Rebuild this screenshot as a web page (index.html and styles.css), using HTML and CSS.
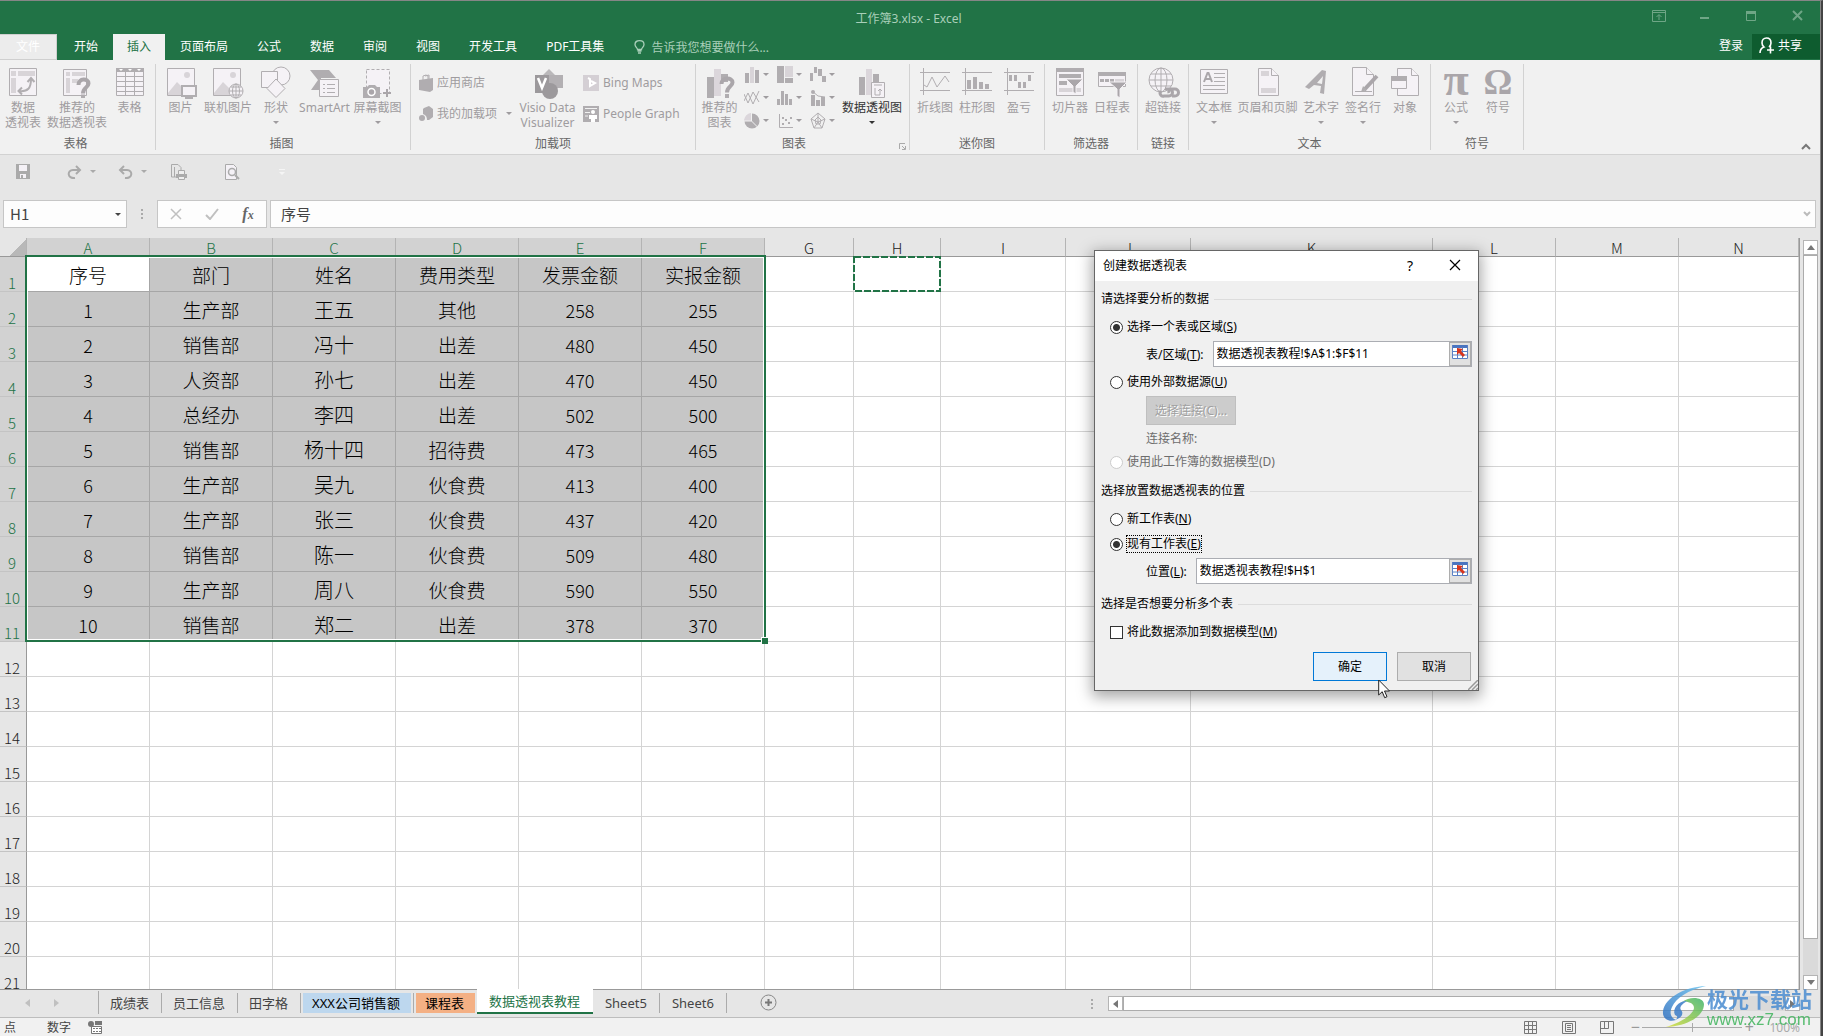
FILE: index.html
```html
<!DOCTYPE html>
<html lang="zh-CN">
<head>
<meta charset="utf-8">
<title>工作簿3.xlsx - Excel</title>
<link rel="stylesheet" href="styles.css">
</head>
<body>
<div class="app">
<header class="titlebar">
  <span class="doc-title">工作簿3.xlsx - Excel</span>
  <div class="win-controls">
    <button aria-label="功能区显示选项"><svg width="14" height="12" viewBox="0 0 14 12"><path d="M.5.5h13v11H.5zM.5 2.500h13M7 10V5M4.500 7 7 4.500 9.500 7" fill="none" stroke="currentColor"/></svg></button>
    <button aria-label="最小化"><svg width="10" height="12" viewBox="0 0 10 12"><path d="M0 7h9v2H0z" fill="currentColor"/></svg></button>
    <button aria-label="最大化"><svg width="10" height="12" viewBox="0 0 10 12"><path d="M.5 1.500h9v9h-9z" fill="none" stroke="currentColor"/><path d="M0 1h10v3H0z" fill="currentColor"/></svg></button>
    <button aria-label="关闭"><svg width="11" height="12" viewBox="0 0 11 12"><path d="m1 1 9 9M10 1l-9 9" stroke="currentColor" stroke-width="2"/></svg></button>
  </div>
</header>
<nav class="tabs">
  <button class="tab file">文件</button>
  <button class="tab">开始</button>
  <button class="tab active">插入</button>
  <button class="tab">页面布局</button>
  <button class="tab">公式</button>
  <button class="tab">数据</button>
  <button class="tab">审阅</button>
  <button class="tab">视图</button>
  <button class="tab">开发工具</button>
  <button class="tab">PDF工具集</button>
  <label class="tellme"><svg width="11" height="14" viewBox="0 0 11 14"><path d="M3.500 9.500C3.500 8 1 7 1 4.500 1 2 3 .7 5.500.7S10 2 10 4.500C10 7 7.500 8 7.500 9.500zM3.500 11h4M4 13h3" fill="none" stroke="currentColor" stroke-width="1.300"/></svg><input type="text" placeholder="告诉我您想要做什么..."></label>
  <a class="signin" href="#">登录</a>
  <button class="share"><svg width="16" height="17" viewBox="0 0 16 17"><path d="M1 16c0-3 1.500-5 4-6C3.800 9 3 7.500 3 6c0-3 1.800-5 4.500-5S12 3 12 6c0 1.500-.8 3-2 4M8 13h7M11.500 9.500v7" fill="none" stroke="#fff" stroke-width="1.600"/></svg>共享</button>
</nav>

<section class="ribbon">
  <div class="group g-tables">
    <div class="items">
      <button class="big"><svg class="ico" viewBox="0 0 32 32"><path class="o" d="M2.500 2.500h27v27h-27z"/><path class="l" d="M4 5h5v5H4zM11 5h17v5H11zM4 12h5v15H4z"/><path class="t" d="M12 25c9 1 12-3 12-12M20.500 16l3.500-4 3.500 4M15 21.500 11.500 25l3.500 3.500"/></svg><span>数据<br>透视表</span></button>
      <button class="big"><svg class="ico" viewBox="0 0 32 32"><path class="o" d="M2.500 3.500h23v26h-23z"/><path class="l" d="M5 6h4v4H5zM11 6h13v4H11zM5 12h4v15H5zM11 13h6v4h-6z"/><path d="M17.500 19c0-7 10-7 10-1.500 0 4-5.500 4-5.500 10" fill="none" stroke="#aaa6aa" stroke-width="4"/><path class="f" d="M20 28.500h4v3.500h-4z"/></svg><span>推荐的<br>数据透视表</span></button>
      <button class="big"><svg class="ico" viewBox="0 0 32 32"><path class="o" d="M2.500 2.500h27v27h-27zM2 10.500h28M2 15.500h28M2 20.500h28M2 25.500h28M11.500 6v24M20.500 6v24"/><path class="f" d="M2 2h28v4H2z"/><path d="M5 3h4l-2 2zM14 3h4l-2 2zM23 3h4l-2 2z" fill="#fff"/></svg>表格</button>
    </div><h2>表格</h2>
  </div>
  <div class="group g-illus">
    <div class="items">
      <button class="big"><svg class="ico" viewBox="0 0 32 32"><path class="o" d="M2.500 2.500h27v27h-27z"/><circle class="l" cx="22" cy="9" r="3"/><path class="l" d="m3 27 9-11 8 8v5H3z"/><path class="o s2" d="M17 20h14v10H17z"/><path class="t" d="M24 30v3M20 32h8"/></svg>图片</button>
      <button class="big"><svg class="ico" viewBox="0 0 32 32"><path class="o" d="M1.500 2.500h27v27h-27z"/><circle class="l" cx="21" cy="9" r="3"/><path class="l" d="m2 27 9-11 8 8v5H2z"/><circle class="o" cx="24" cy="25" r="7"/><path class="o" d="M17 25h14M24 18v14M19 21h10M19 29h10"/><ellipse class="n" cx="24" cy="25" rx="3.500" ry="7"/></svg>联机图片</button>
      <button class="big"><svg class="ico" viewBox="0 0 32 32"><circle class="o" cx="21" cy="10" r="9"/><path class="o" d="M1.500 5.500h16v16h-16z"/><path class="o" d="m16 13 9 9.500-9 9-9-9z"/></svg>形状<i class="caret"></i></button>
      <button class="big"><svg class="ico" viewBox="0 0 32 32"><path class="f" d="M1 4h19l7 8h-15v12H2l7-10z"/><path class="o" d="M10.500 13.500h19v17h-19z"/><path class="o" d="M14 18.500h2M18 18.500h8M14 22.500h2M18 22.500h8M14 26.500h2M18 26.500h8"/></svg>SmartArt</button>
      <button class="big"><svg class="ico" viewBox="0 0 32 32"><path class="o" stroke-dasharray="3 2" d="M4.500 3.500h23v24h-23z"/><path class="f" d="M1 21h4l2-2h6l2 2h3v11H1z"/><circle cx="9.500" cy="26" r="3.500" fill="#aaa6aa" stroke="#fff" stroke-width="1.500"/><path d="M25 23v8M21 27h8" stroke="#aaa6aa" stroke-width="2"/></svg>屏幕截图<i class="caret"></i></button>
    </div><h2>插图</h2>
  </div>
  <div class="group g-addins">
    <div class="items">
      <div class="stack">
        <button class="small"><svg width="14" height="18" viewBox="0 0 14 18"><path class="f" d="M0 6 14 4v12l-3 2-11-2z"/><path class="n" d="M4 6V2l3-1 2 1v3M6 2l4-1v4"/></svg>应用商店</button>
        <button class="small"><svg width="14" height="18" viewBox="0 0 14 18"><path class="f" d="m5 3 5-2 4 3v8l-4 3H8c0-3-1-5-4-6V4z"/><circle class="f" cx="3" cy="13" r="3"/></svg>我的加载项<i class="caret side"></i></button>
      </div>
      <button class="big"><svg class="ico" viewBox="0 0 32 32"><path d="m17 3 7 7-7 7-7-7z" fill="#bab8ba"/><path d="M17 9h14v13H17z" fill="#b3b0b3"/><circle cx="18" cy="25" r="8" fill="#9c999c"/><path d="M3 9h14v18H3z" fill="#9c999c"/><path d="m6 12 4 10 4-10" fill="none" stroke="#fff" stroke-width="2.500"/></svg><span>Visio Data<br>Visualizer</span></button>
      <div class="stack">
        <button class="small"><svg width="16" height="18" viewBox="0 0 16 18"><path d="M0 1h16v16H0z" fill="#d4cfd4"/><path d="m5 4 2 1v7l5-3-4-2" fill="none" stroke="#fff" stroke-width="2"/></svg>Bing Maps</button>
        <button class="small"><svg width="16" height="18" viewBox="0 0 16 18"><path class="f" d="M0 1h16v16H0z"/><path d="M2 3.500h12M2 7.500h5M2 11h3" stroke="#f1f1f1"/><circle cx="10" cy="7" r="2" fill="#fff"/><path d="M6 10h8v4h-2v3H8v-3H6z" fill="#fff"/></svg>People Graph</button>
      </div>
    </div><h2>加载项</h2>
  </div>
  <div class="group g-charts">
    <div class="items">
      <button class="big"><svg class="ico" viewBox="0 0 32 32"><path class="f" d="M3 11h7v21H3zM17 8h7v8h-7z"/><path d="M10 3h7v27h-7z" fill="#dbd6db"/><path d="M17.500 18c0-7 11-7 11-1.500 0 4-5.500 4-5.500 10" fill="none" stroke="#aaa6aa" stroke-width="4"/><path class="f" d="M21 28h4v4h-4z"/></svg><span>推荐的<br>图表</span></button>
      <div class="minis">
        <button aria-label="柱形图"><svg viewBox="0 0 16 18"><path class="f" d="M1 7h4v10H1zM11 4h4v13h-4z"/><path class="l" d="M6 1h4v16H6z"/></svg><i class="caret"></i></button>
        <button aria-label="层次结构图"><svg viewBox="0 0 16 18"><path class="f" d="M0 0h7v17H0zM8 12h8v5H8z"/><path class="l" d="M8 0h8v11H8z"/></svg><i class="caret"></i></button>
        <button aria-label="瀑布图"><svg viewBox="0 0 16 18"><path class="f" d="M0 7h3v8H0zM4 1h3v6H4zM8 3h4v7H8zM12 10h4v6h-4z"/></svg><i class="caret"></i></button>
        <button aria-label="折线图"><svg viewBox="0 0 16 18"><path class="n" d="m0 12 4-8 5 11 6-13M0 5l4 9 5-11 6 10"/></svg><i class="caret"></i></button>
        <button aria-label="统计图"><svg viewBox="0 0 16 18"><path class="f" d="M0 10h3v6H0zM4 2h3v14H4zM8 5h3v11H8zM12 10h3v6h-3z"/></svg><i class="caret"></i></button>
        <button aria-label="组合图"><svg viewBox="0 0 16 18"><path class="f" d="M1 6h4v11H1zM6 11h4v6H6zM11 8h4v9h-4z"/><path class="n" d="m2 2 6 5 7 1"/><circle class="f" cx="3" cy="3" r="2"/></svg><i class="caret"></i></button>
        <button aria-label="饼图"><svg viewBox="0 0 16 18"><circle class="f" cx="8" cy="9" r="7.500"/><path d="M7 9V1a8 8 0 0 0-7 8z" fill="#dbd6db"/><path d="M7.500 1v8l6 6M7.500 9H0" stroke="#f1f1f1" fill="none"/></svg><i class="caret"></i></button>
        <button aria-label="散点图"><svg viewBox="0 0 16 18"><path class="n" d="M2.500 2v13.500H16"/><path class="f" d="M5 11h2v2H5zM8 7h2v2H8zM11 10h2v2h-2zM13 5h2v2h-2zM5 5h2v2H5z"/></svg><i class="caret"></i></button>
        <button aria-label="雷达图"><svg viewBox="0 0 16 18"><path class="n" d="m8 1 7 6-3 9H4L1 7zM8 5l3 3-1 4H6L5 8zM8 1v9M15 7l-7 3 4 6M1 7l7 3-4 6"/></svg><i class="caret"></i></button>
      </div>
      <button class="big on"><svg class="ico" viewBox="0 0 32 32"><path class="f" d="M3 11h6v18H3zM17 8h6v8h-6z"/><path d="M10 3h6v26h-6z" fill="#dbd6db"/><path class="o" d="M15.500 16.500h13v15h-13z"/><path class="n" d="M18 19h8M19 22v7h5v-6M22 25l2-2 2 2"/></svg>数据透视图<i class="caret"></i></button>
    </div><h2>图表</h2>
    <button class="launcher" aria-label="图表对话框"><svg width="7" height="7" viewBox="0 0 7 7"><path d="M.5 6V.5H6M3 3l3 3M6.500 3v3.500H3" fill="none" stroke="#aaa"/></svg></button>
  </div>
  <div class="group">
    <div class="items">
      <button class="big"><svg class="ico" viewBox="0 0 32 32"><path class="n" d="M1 6.500h30M1 24.500h30M4.500 2v27M5 19l3 2 5-10 5 10 8-11 4 6"/></svg>折线图</button>
      <button class="big"><svg class="ico" viewBox="0 0 32 32"><path class="n" d="M1 6.500h30M1 24.500h30M4.500 2v27"/><path class="f" d="M6 14h4v9H6zM12 11h4v12h-4zM18 16h4v7h-4zM24 18h4v5h-4z"/></svg>柱形图</button>
      <button class="big"><svg class="ico" viewBox="0 0 32 32"><path class="n" d="M1 6.500h30M1 24.500h30M4.500 2v27"/><path class="f" d="M6 9h3v6H6zM11 9h3v6h-3zM15 16h3v6h-3zM20 16h3v6h-3zM25 9h3v6h-3z"/></svg>盈亏</button>
    </div><h2>迷你图</h2>
  </div>
  <div class="group">
    <div class="items">
      <button class="big"><svg class="ico" viewBox="0 0 32 32"><path class="o" d="M2.500 2.500h27v27h-27z"/><path class="f" d="M2 2h28v4H2zM5 8h22v4H5zM5 15h8v4H5z"/><path class="l" d="M5 22h22v4H5z"/><path d="M12 13h17l-7 7v8l-3-2v-6z" fill="#aaa6aa" stroke="#f4f1f4"/></svg>切片器</button>
      <button class="big"><svg class="ico" viewBox="0 0 32 32"><path class="o" d="M2.500 6.500h27v14h-27z"/><path class="f" d="M2 6h28v4H2zM4 13h4v3H4zM9 13h4v3H9zM14 13h4v3h-4z"/><path class="l" d="M19 13h9v3h-9z"/><path d="M13 16h18l-7 7v9l-3-2v-7z" fill="#aaa6aa" stroke="#f4f1f4"/></svg>日程表</button>
    </div><h2>筛选器</h2>
  </div>
  <div class="group">
    <div class="items">
      <button class="big"><svg class="ico" viewBox="0 0 32 32"><circle class="o" cx="14" cy="14" r="12"/><ellipse class="n" cx="14" cy="14" rx="6" ry="12"/><path class="n" d="M14 2v24M2 14h24M4 8h20M4 20h20"/><path d="M18 23h4a3 3 0 0 1 0 7h-5a3 3 0 0 1-3-5M25 30h3a3 3 0 0 0 0-7h-4a3 3 0 0 0-2 4" fill="none" stroke="#aaa6aa" stroke-width="3"/></svg>超链接</button>
    </div><h2>链接</h2>
  </div>
  <div class="group g-text">
    <div class="items">
      <button class="big"><svg class="ico" viewBox="0 0 32 32"><path class="o" d="M2.500 3.500h27v24h-27z"/><path class="n" d="M16 7.500h11M16 11.500h11M16 15.500h11M5 19.500h22M5 23.500h22"/><path d="m6 16 3.500-9h1L14 16M7.500 13h5" fill="none" stroke="#aaa6aa" stroke-width="2"/></svg>文本框<i class="caret"></i></button>
      <button class="big"><svg class="ico" viewBox="0 0 32 32"><path class="o" d="M6.500 2.500h13l7 7v20h-20z"/><path class="o" d="M19.500 2.500v7h7"/><path class="l" d="M9 5h8v5H9zM9 22h15v5H9z"/></svg>页眉和页脚</button>
      <button class="big"><svg class="ico" viewBox="0 0 32 32"><path class="f" d="M0 21 17 4l4 1-2 23-4-1 1-7-7-1-5 4zM12 17l5 1 1-8z" fill-rule="evenodd"/></svg>艺术字<i class="caret"></i></button>
      <button class="big"><svg class="ico" viewBox="0 0 32 32"><path class="o" d="M5.500 1.500h14l7 7v21h-21z"/><path class="o" d="M19.500 1.500v7h7"/><path class="n" d="M8 25.500h17"/><path d="M17 24 30 10" stroke="#aaa6aa" stroke-width="4"/><path class="f" d="m14 26 2-6 4 4z"/></svg>签名行<i class="caret"></i></button>
      <button class="big"><svg class="ico" viewBox="0 0 32 32"><path class="o" d="M8.500 2.500h14l7 7v20h-21z"/><path class="o" d="M22.500 2.500v7h7"/><path class="o" d="M2.500 10.500h15v12h-15z"/><path class="f" d="M2 10h16v5H2z"/></svg>对象</button>
    </div><h2>文本</h2>
  </div>
  <div class="group">
    <div class="items">
      <button class="big"><span class="ico glyph">π</span>公式<i class="caret"></i></button>
      <button class="big"><span class="ico glyph omega">Ω</span>符号</button>
    </div><h2>符号</h2>
  </div>
  <button class="collapse" aria-label="折叠功能区"><svg width="10" height="7" viewBox="0 0 10 7"><path d="m1 6 4-4 4 4" fill="none" stroke="#777" stroke-width="2"/></svg></button>
</section>

<div class="qat">
  <button aria-label="保存"><svg width="14" height="15" viewBox="0 0 14 15"><path d="M0 0h14v15H0z" fill="#aaa"/><path d="M3 1h8v6H3zM4 10h6v4H4z" fill="#f4f1f6"/><path d="M5 11h2v3H5z" fill="#aaa"/></svg></button>
  <button aria-label="恢复"><svg width="16" height="14" viewBox="0 0 16 14"><path d="M8 13C0 14 0 5 6 5h6M9 1l4 4-4 4" fill="none" stroke="#aaa" stroke-width="2"/></svg><i class="caret"></i></button>
  <button aria-label="撤消"><svg width="16" height="14" viewBox="0 0 16 14"><path d="M7 13c8 1 8-8 2-8H3M6 1 2 5l4 4" fill="none" stroke="#aaa" stroke-width="2"/></svg><i class="caret"></i></button>
  <button aria-label="快速打印"><svg width="16" height="16" viewBox="0 0 16 16"><path d="M5 13H.5V.5H7l3 3V6M3.500 13V3" fill="none" stroke="#aaa"/><path d="M5 10h11v4H5z" fill="#aaa"/><path d="M7.500 6.500h6v4h-6zM7.500 12.500h6v3h-6z" fill="#eee" stroke="#aaa"/></svg></button>
  <button aria-label="打印预览"><svg width="15" height="16" viewBox="0 0 15 16"><path d="M.5.500h8l3 3v12H.5z" fill="#f4f1f6" stroke="#aaa"/><circle cx="7" cy="8" r="3.500" fill="none" stroke="#aaa" stroke-width="1.500"/><path d="m10 11 4 4" stroke="#aaa" stroke-width="2"/></svg></button>
  <button aria-label="自定义快速访问工具栏"><svg width="6" height="6" viewBox="0 0 6 6"><path d="M0 0h6v1H0zM0 3h6L3 6z" fill="#f5f5f5"/></svg></button>
</div>

<div class="formula">
  <label class="namebox"><input type="text" value="H1" aria-label="名称框"><i class="caret"></i></label>
  <span class="dots"></span>
  <div class="fx">
    <button aria-label="取消"><svg width="12" height="12" viewBox="0 0 12 12"><path d="m1 1 10 10M11 1 1 11" stroke="#c0c0c0" stroke-width="1.500"/></svg></button>
    <button aria-label="输入"><svg width="14" height="12" viewBox="0 0 14 12"><path d="m1 7 4 4 8-10" fill="none" stroke="#c0c0c0" stroke-width="2"/></svg></button>
    <button aria-label="插入函数" class="fn"><i>f<small>x</small></i></button>
  </div>
  <label class="fbox"><input type="text" value="序号" aria-label="编辑栏"><svg width="8" height="6" viewBox="0 0 8 6"><path d="m1 1 3 3 3-3" fill="none" stroke="#bbb" stroke-width="2"/></svg></label>
</div>

<main class="sheet">
<div class="grid">
<table>
<colgroup><col class="c-row"><col class="c-std"><col class="c-std"><col class="c-std"><col class="c-std"><col class="c-std"><col class="c-std"><col class="c-g"><col class="c-h"><col class="c-i"><col class="c-i"><col class="c-k"><col class="c-std"><col class="c-std"><col></colgroup>
<thead><tr><th class="corner"></th><th class="sel">A</th><th class="sel">B</th><th class="sel">C</th><th class="sel">D</th><th class="sel">E</th><th class="sel">F</th><th>G</th><th>H</th><th>I</th><th>J</th><th>K</th><th>L</th><th>M</th><th>N</th></tr></thead>
<tbody class="data">
<tr><th>1</th><td class="current">序号</td><td>部门</td><td>姓名</td><td>费用类型</td><td>发票金额</td><td>实报金额</td><td></td><td class="target"><svg class="ants" width="88" height="36" viewBox="0 0 88 36"><rect x="1" y="1" width="86" height="34"/></svg></td><td></td><td></td><td></td><td></td><td></td><td></td></tr>
<tr><th>2</th><td>1</td><td>生产部</td><td class="name">王五</td><td>其他</td><td>258</td><td>255</td><td></td><td></td><td></td><td></td><td></td><td></td><td></td><td></td></tr>
<tr><th>3</th><td>2</td><td>销售部</td><td class="name">冯十</td><td>出差</td><td>480</td><td>450</td><td></td><td></td><td></td><td></td><td></td><td></td><td></td><td></td></tr>
<tr><th>4</th><td>3</td><td>人资部</td><td class="name">孙七</td><td>出差</td><td>470</td><td>450</td><td></td><td></td><td></td><td></td><td></td><td></td><td></td><td></td></tr>
<tr><th>5</th><td>4</td><td>总经办</td><td class="name">李四</td><td>出差</td><td>502</td><td>500</td><td></td><td></td><td></td><td></td><td></td><td></td><td></td><td></td></tr>
<tr><th>6</th><td>5</td><td>销售部</td><td class="name">杨十四</td><td>招待费</td><td>473</td><td>465</td><td></td><td></td><td></td><td></td><td></td><td></td><td></td><td></td></tr>
<tr><th>7</th><td>6</td><td>生产部</td><td class="name">吴九</td><td>伙食费</td><td>413</td><td>400</td><td></td><td></td><td></td><td></td><td></td><td></td><td></td><td></td></tr>
<tr><th>8</th><td>7</td><td>生产部</td><td class="name">张三</td><td>伙食费</td><td>437</td><td>420</td><td></td><td></td><td></td><td></td><td></td><td></td><td></td><td></td></tr>
<tr><th>9</th><td>8</td><td>销售部</td><td class="name">陈一</td><td>伙食费</td><td>509</td><td>480</td><td></td><td></td><td></td><td></td><td></td><td></td><td></td><td></td></tr>
<tr><th>10</th><td>9</td><td>生产部</td><td class="name">周八</td><td>伙食费</td><td>590</td><td>550</td><td></td><td></td><td></td><td></td><td></td><td></td><td></td><td></td></tr>
<tr><th>11</th><td>10</td><td>销售部</td><td class="name">郑二</td><td>出差</td><td>378</td><td>370</td><td></td><td></td><td></td><td></td><td></td><td></td><td></td><td></td></tr>
</tbody>
<tbody>
<tr><th>12</th><td></td><td></td><td></td><td></td><td></td><td></td><td></td><td></td><td></td><td></td><td></td><td></td><td></td><td></td></tr>
<tr><th>13</th><td></td><td></td><td></td><td></td><td></td><td></td><td></td><td></td><td></td><td></td><td></td><td></td><td></td><td></td></tr>
<tr><th>14</th><td></td><td></td><td></td><td></td><td></td><td></td><td></td><td></td><td></td><td></td><td></td><td></td><td></td><td></td></tr>
<tr><th>15</th><td></td><td></td><td></td><td></td><td></td><td></td><td></td><td></td><td></td><td></td><td></td><td></td><td></td><td></td></tr>
<tr><th>16</th><td></td><td></td><td></td><td></td><td></td><td></td><td></td><td></td><td></td><td></td><td></td><td></td><td></td><td></td></tr>
<tr><th>17</th><td></td><td></td><td></td><td></td><td></td><td></td><td></td><td></td><td></td><td></td><td></td><td></td><td></td><td></td></tr>
<tr><th>18</th><td></td><td></td><td></td><td></td><td></td><td></td><td></td><td></td><td></td><td></td><td></td><td></td><td></td><td></td></tr>
<tr><th>19</th><td></td><td></td><td></td><td></td><td></td><td></td><td></td><td></td><td></td><td></td><td></td><td></td><td></td><td></td></tr>
<tr><th>20</th><td></td><td></td><td></td><td></td><td></td><td></td><td></td><td></td><td></td><td></td><td></td><td></td><td></td><td></td></tr>
<tr><th>21</th><td></td><td></td><td></td><td></td><td></td><td></td><td></td><td></td><td></td><td></td><td></td><td></td><td></td><td></td></tr>
</tbody>
</table>
<div class="selection"></div>
</div>
<div class="vscroll">
  <button aria-label="向上滚动"><svg width="8" height="5" viewBox="0 0 8 5"><path d="m0 5 4-5 4 5z" fill="#777"/></svg></button>
  <div class="thumb"></div><div class="track"></div>
  <button aria-label="向下滚动"><svg width="8" height="5" viewBox="0 0 8 5"><path d="m0 0 4 5 4-5z" fill="#777"/></svg></button>
</div>
</main>

<div class="sheetbar">
  <div class="nav"><button aria-label="上一个"><svg width="5" height="8" viewBox="0 0 5 8"><path d="M5 0 0 4l5 4z" fill="#c0c0c0"/></svg></button><button aria-label="下一个"><svg width="5" height="8" viewBox="0 0 5 8"><path d="m0 0 5 4-5 4z" fill="#c0c0c0"/></svg></button></div>
  <button class="st">成绩表</button><button class="st">员工信息</button><button class="st">田字格</button><button class="st blue">XXX公司销售额</button><button class="st orange">课程表</button><button class="st cur">数据透视表教程</button><button class="st">Sheet5</button><button class="st">Sheet6</button>
  <button class="add" aria-label="新工作表"><svg width="17" height="17" viewBox="0 0 17 17"><circle cx="8.500" cy="8.500" r="7.500" fill="none" stroke="#888"/><path d="M8.500 5v7M5 8.500h7" stroke="#777" stroke-width="2"/></svg></button>
  <span class="dots"></span>
  <div class="hscroll">
    <button aria-label="向左滚动"><svg width="5" height="8" viewBox="0 0 5 8"><path d="M5 0 0 4l5 4z" fill="#777"/></svg></button>
    <div class="thumb"></div><div class="track"></div>
    <button aria-label="向右滚动"><svg width="5" height="8" viewBox="0 0 5 8"><path d="m0 0 5 4-5 4z" fill="#777"/></svg></button>
  </div>
</div>
<footer class="status">
  <span>点</span><span class="num">数字</span>
  <svg width="14" height="13" viewBox="0 0 14 13"><path d="M3.500 5.500h10v7h-10z" fill="#fff" stroke="#777"/><path d="M7 0h7v4H7zM5 7h2v1H5zM8 7h2v1H8zM11 7h2v1h-2zM5 10h2v1H5zM8 10h2v1H8zM11 10h2v1h-2z" fill="#777"/><circle cx="3" cy="3" r="3" fill="#777"/></svg>
  <div class="views">
    <button aria-label="普通"><svg width="14" height="13" viewBox="0 0 14 13"><path d="M.5.500h12v12H.5zM0 4.500h13M0 8.500h13M4.500 0v13M8.500 0v13" fill="none" stroke="#777"/></svg></button>
    <button aria-label="页面布局"><svg width="14" height="13" viewBox="0 0 14 13"><path d="M.5.500h13v12H.5zM3.500 2.500h7v8h-7zM5 4.500h4M5 6.500h4M5 8.500h4" fill="none" stroke="#777"/></svg></button>
    <button aria-label="分页预览"><svg width="14" height="13" viewBox="0 0 14 13"><path d="M.5.500h13v12H.5zM.5 7.500h8V0M4.500 0v7" fill="none" stroke="#777"/></svg></button>
  </div>
  <button class="zm">−</button><input type="range" min="0" max="200" value="100" aria-label="缩放"><button class="zm">+</button><span class="pct">100%</span>
</footer>
</div>

<form class="dialog" role="dialog" aria-label="创建数据透视表">
  <div class="dlg-title"><span>创建数据透视表</span><button type="button" class="help">?</button><button type="button" aria-label="关闭"><svg width="12" height="12" viewBox="0 0 12 12"><path d="m1 1 10 10M11 1 1 11" stroke="#000" stroke-width="1.200"/></svg></button></div>
  <div class="dlg-body">
    <h3 class="first">请选择要分析的数据</h3>
    <label class="opt lead"><input type="radio" name="src" checked><span>选择一个表或区域(<u>S</u>)</span></label>
    <div class="field"><label for="rng">表/区域(<u>T</u>):</label><span class="ref"><input id="rng" type="text" value="数据透视表教程!$A$1:$F$11"><button type="button" aria-label="选择区域"><svg width="16" height="14" viewBox="0 0 16 14"><path d="M0 0h16v14H0z" fill="#fff"/><path d="M0 0h16v3H0z" fill="#4a74c0"/><path d="M.5 0v13.500h15V0M0 6.500h16M0 10h16M5.500 2v11M10.500 2v11" fill="none" stroke="#5a80c4"/><path d="m5 3 6 1-2 2 4 4-2 2-4-4-2 2z" fill="#d8341c"/></svg></button></span></div>
    <label class="opt after"><input type="radio" name="src"><span>使用外部数据源(<u>U</u>)</span></label>
    <button type="button" class="conn" disabled>选择连接(C)...</button>
    <div class="conn-name">连接名称:</div>
    <label class="opt off"><input type="radio" name="src" disabled><span>使用此工作簿的数据模型(D)</span></label>
    <h3>选择放置数据透视表的位置</h3>
    <label class="opt lead"><input type="radio" name="dst"><span>新工作表(<u>N</u>)</span></label>
    <label class="opt next"><input type="radio" name="dst" checked><span class="focus">现有工作表(<u>E</u>)</span></label>
    <div class="field"><label for="loc">位置(<u>L</u>):</label><span class="ref"><input id="loc" type="text" value="数据透视表教程!$H$1"><button type="button" aria-label="选择位置"><svg width="16" height="14" viewBox="0 0 16 14"><path d="M0 0h16v14H0z" fill="#fff"/><path d="M0 0h16v3H0z" fill="#4a74c0"/><path d="M.5 0v13.500h15V0M0 6.500h16M0 10h16M5.500 2v11M10.500 2v11" fill="none" stroke="#5a80c4"/><path d="m5 3 6 1-2 2 4 4-2 2-4-4-2 2z" fill="#d8341c"/></svg></button></span></div>
    <h3>选择是否想要分析多个表</h3>
    <label class="opt lead"><input type="checkbox"><span>将此数据添加到数据模型(<u>M</u>)</span></label>
    <div class="actions"><button type="button" class="ok">确定</button><button type="button">取消</button></div>
  </div>
  <svg class="grip" width="10" height="10" viewBox="0 0 10 10"><path d="M0 10 10 0M4 10l6-6M8 10l2-2" stroke="#999" stroke-width="1.500"/></svg>
  <svg class="cursor" width="13" height="20" viewBox="0 0 13 20"><path d="M.7 1v15l3.500-3.300 2.500 6 2.300-1-2.500-5.700h5z" fill="#fff" stroke="#222"/></svg>
</form>

<div class="watermark">
  <svg width="44" height="42" viewBox="0 0 44 42"><defs><linearGradient id="wb" x1="1" y1="0" x2="0" y2="1"><stop offset="0" stop-color="#6cc4f0"/><stop offset="1" stop-color="#2f6fc0"/></linearGradient><linearGradient id="wg" x1="1" y1="0" x2="0" y2="1"><stop offset="0" stop-color="#3db36b"/><stop offset="1" stop-color="#d9de3c"/></linearGradient></defs><path d="M44 0C20 1 0 14 1 28c1 6 7 8 13 6-5-2-7-7-4-13C14 12 26 4 44 0z" fill="url(#wb)"/><path d="M20 16c8-6 21-5 22 2 0 12-16 22-38 23 14-4 27-12 28-19 0-5-6-7-12-6z" fill="url(#wg)"/><path d="M13 29c-3-6 3-14 12-14-5 3-8 6-6 9 3 3 1 8-6 10 3-2 3-4 0-5z" fill="#3a7cc8"/></svg>
  <div><b>极光下载站</b><span>www.xz7.com</span></div>
</div>
</body>
</html>
```
FILE: styles.css
```css
* { box-sizing: border-box; }
body {
  margin: 0;
  font: 12px/15px "Noto Sans", "Noto Sans CJK SC", sans-serif;
  color: #444;
  overflow: hidden;
}
button {
  margin: 0; padding: 0; border: 0; background: none;
  font: inherit; color: inherit; white-space: nowrap;
}
input { font: inherit; color: inherit; margin: 0; min-width: 0; }
input[type="text"] { border: 0; background: none; padding: 0; outline: 0; }
svg { display: block; }
h2, h3 { margin: 0; font: inherit; }

.app {
  display: flex; flex-direction: column;
  height: 100vh;
  background: #e6e6e6;
  border-top: 1px solid #868686;
  border-right: 2px solid #444;
  box-shadow: inset -1px 0 #868686;
  padding-right: 1px;
}

/* title bar */
.titlebar {
  position: relative;
  display: flex; justify-content: center; align-items: center;
  height: 33px; flex: none; padding: 1px 3px 0 0;
  background: #217346; color: #a9cfb9;
}
.win-controls { position: absolute; right: 0; top: 0; display: flex; color: #6fa686; }
.win-controls button { width: 46px; height: 30px; display: flex; justify-content: center; align-items: center; }

/* tabs */
.tabs { display: flex; flex: none; height: 26px; background: #217346; color: #fff; }
.tab { padding: 0 14px 2px; margin-right: 1px; }
.tab.file { width: 57px; margin: 0 3px 0 0; background: #ececec; border: 1px solid #cfcfcf; border-left: 0; height: 26px; }
.tab.active { background: #f1f1f1; color: #217346; }
.tellme { display: flex; align-items: center; gap: 6px; margin-left: 15px; color: #a9cfb9; flex: 1; }
.tellme input { flex: 1; }
.tellme input::placeholder { color: #a9cfb9; opacity: 1; }
.signin { color: #fff; text-decoration: none; padding: 4px 9px; }
.share { display: flex; align-items: center; gap: 3px; width: 68px; height: 25px; padding: 0 0 2px 7px; background: #0e5c2f; }

/* ribbon */
.ribbon {
  display: flex; flex: none; height: 95px; position: relative;
  background: #f1f1f1; border-bottom: 1px solid #d2d2d2; color: #9f9c9f;
}
.group { display: flex; flex-direction: column; justify-content: space-between; position: relative; padding: 0 5px 3px 4px; }
.group::after { content: ""; position: absolute; right: 0; top: 4px; bottom: 4px; width: 1px; background: #d2d2d2; }
.group h2 { text-align: center; color: #666; }
.items { display: grid; grid-auto-flow: column; grid-auto-columns: 42px; }
.group.g-tables { padding-left: 0; }
.g-tables .items { grid-template-columns: 46px 62px 43px; }
.group.g-illus { padding-left: 1px; }
.g-illus .items { grid-template-columns: 47px 48px 48px 49px 57px; }
.g-addins .items { grid-template-columns: 101px 63px 112px; }
.group.g-charts { padding: 0 8px 3px 0; }
.g-charts .items { grid-template-columns: 47px 99px 60px; }
.g-charts h2 { margin-right: 10px; }
.g-text .items { grid-template-columns: 42px 65px 42px 42px 42px; }
.big { display: flex; flex-direction: column; align-items: center; padding-top: 6px; line-height: 15px; text-align: center; }
.big.on { color: #333; }
.ico { width: 32px; height: 32px; margin-bottom: 2px; overflow: visible; flex: none; }
.glyph { font: bold 46px/28px "Liberation Serif", serif; color: #aaa6aa; display: flex; justify-content: center; }
.glyph.omega { font-size: 36px; line-height: 32px; }
.caret { display: block; width: 0; height: 0; border: 3px solid transparent; border-top-color: currentColor; border-bottom: 0; }
.big .caret { margin-top: 6px; }
.o { fill: #f5f2f6; stroke: #b1aeb1; }
.n, .t { fill: none; stroke: #b1aeb1; }
.t { stroke-width: 2; }
.s2 { stroke-width: 2; }
.f { fill: #b0adb0; }
.l { fill: #d8d4d8; }
.stack { display: flex; flex-direction: column; padding: 7px 0 0 4px; }
.small { display: flex; align-items: center; gap: 4px; height: 31px; }
.side { margin-left: 5px; }
.minis { display: grid; grid-template-columns: repeat(3, 33px); grid-template-rows: repeat(3, 23px); padding-top: 3px; }
.minis button { display: flex; align-items: center; gap: 3px; }
.minis svg { width: 16px; height: 18px; margin-left: 1px; }
.launcher { position: absolute; right: 4px; bottom: 4px; }
.collapse { margin: auto 9px 4px auto; }

/* quick access */
.qat { display: flex; align-items: center; flex: none; height: 45px; padding: 0 0 12px 16px; color: #aaa; }
.qat button { display: flex; align-items: center; gap: 7px; width: 51px; }
.qat button:nth-child(3) { width: 53px; }
.qat button:nth-child(4) { width: 54px; }
.qat button:nth-child(5) { width: 54px; }

/* formula bar */
.formula { display: flex; flex: none; height: 28px; margin: 0 4px 0 3px; font-size: 15px; }
.formula > label, .fx { display: flex; align-items: center; background: #fdfdfd; border: 1px solid #c6c6c6; }
.formula input { font-family: "Noto Sans CJK SC", sans-serif; height: 24px; padding-bottom: 2px; }
.namebox { width: 124px; padding: 0 5px 0 6px; justify-content: space-between; }
.namebox input { width: 100px; }
.dots { width: 30px; background: linear-gradient(#aaa, #aaa) center 9px / 2px 2px no-repeat, linear-gradient(#aaa, #aaa) center 13px / 2px 2px no-repeat, linear-gradient(#aaa, #aaa) center 17px / 2px 2px no-repeat; }
.fx { width: 110px; }
.fx button { flex: 1; display: flex; justify-content: center; }
.fn { font: bold 16px/16px "Liberation Serif", serif; color: #666; }
.fn small { font-size: 12px; }
.fbox { flex: 1; margin-left: 3px; padding: 0 4px 0 10px; }
.fbox input { flex: 1; }

/* sheet */
.sheet { display: flex; flex: 1; min-height: 0; padding-top: 10px; }
.grid { position: relative; flex: 1; overflow: hidden; border-right: 1px solid #999; border-bottom: 1px solid #999; }
table { width: 100%; table-layout: fixed; border-collapse: separate; border-spacing: 0; font-family: "Noto Sans CJK SC", sans-serif; }
.c-row { width: 27px; } .c-std { width: 123px; } .c-g { width: 89px; } .c-h { width: 87px; }
.c-i { width: 125px; } .c-k { width: 242px; }
th, td { padding: 0; border: 0 solid #d4d4d4; border-width: 0 1px 1px 0; font-weight: 300; line-height: 18px; text-align: center; }
th { font-size: 15px; line-height: 16px; background: #e6e6e6; border-color: #b4b4b4; color: #222; }
thead th { height: 19px; padding-top: 2px; border-bottom-color: #999; }
thead th.corner { background: linear-gradient(135deg, #e6e6e6 62%, #b8b8b8 62%); border-color: #e6e6e6 #b4b4b4 #999; }
tbody th { height: 35px; padding-right: 2px; vertical-align: bottom; border-right-color: #999; border-bottom-color: #c4c4c4; }
th.sel, .data th { background: #d2d2d2; color: #217346; }
td { background: #fff; font-size: 19px; color: #000; }
.data td:nth-child(-n+7) { background: #c6c6c6; border-color: #a6a6a6; padding-top: 1px; }
.data td:nth-child(2), .data td:nth-child(6), .data td:nth-child(7) { font-size: 18px; }
.data tr:first-child td { font-size: 19px; }
.data td.name { font-size: 20px; }
.data td.current { background: #fff; }
.target { position: relative; }
.ants { position: absolute; left: -1px; top: -1px; }
.ants rect { fill: none; stroke: #217346; stroke-width: 2; stroke-dasharray: 7 2; }
.selection { position: absolute; left: 25px; top: 17px; width: 741px; height: 387px; border: 2px solid #217346; box-shadow: inset 0 0 0 1px #fff; }
.selection::after { content: ""; position: absolute; right: -4px; bottom: -4px; width: 6px; height: 6px; background: #217346; border: solid #fff; border-width: 1px 0 0 1px; }
.vscroll { display: flex; flex-direction: column; width: 15px; margin: 2px 2px 0 3px; }
.vscroll button, .hscroll button { display: flex; align-items: center; justify-content: center; background: #fff; border: 1px solid #b4b4b4; flex: none; width: 15px; height: 15px; }
.thumb { background: #fff; border: 1px solid #acacac; flex: 19; }
.track { background: #dadada; flex: 1; }

/* sheet tabs */
.sheetbar { display: flex; flex: none; height: 28px; font-size: 13px; border-bottom: 1px solid #bdbdbd; }
.nav { width: 99px; display: flex; align-items: center; gap: 24px; padding-left: 25px; border-right: 1px solid #ababab; height: 23px; margin-top: 1px; }
.st { padding: 0 12px 0 11px; height: 20px; margin-top: 3px; border-right: 1px solid #ababab; }
.st.blue, .st.orange { color: #000; padding: 0 11px 0 9px; border: solid #e6e6e6; border-width: 0 2px; background: #bdd7ee; box-shadow: 1px 0 #ababab; }
.st.orange { background: #f4b084; box-shadow: none; margin-left: 1px; }
.st.cur { background: #fff; color: #217346; border-right: 0; border-bottom: 2px solid #217346; height: 25px; margin-top: -1px; padding: 1px 13px 0 12px; position: relative; }
.cur ~ .st { padding: 0 12px; }
.add { margin: 4px 0 0 33px; height: 17px; }
.sheetbar > .dots { margin-left: auto; }
.hscroll { display: flex; width: 38%; margin: 6px 20px 0 1px; height: 15px; }
.hscroll .thumb { flex: 12; }

/* status bar */
.status { display: flex; align-items: center; flex: none; height: 18px; padding: 0 20px 0 4px; background: #f1f1f1; }
.num { margin: 0 17px 0 31px; }
.views { display: flex; gap: 24px; margin-left: auto; margin-right: 15px; }
.zm { width: 12px; color: #999; font-size: 16px; line-height: 16px; }
.status input { appearance: none; width: 100px; height: 9px; margin: 0 1px; background: linear-gradient(#aaa, #aaa) center / 1px 9px no-repeat, linear-gradient(#aaa, #aaa) center / 100% 1px no-repeat; }
.status input::-webkit-slider-thumb { appearance: none; width: 1px; height: 9px; background: #aaa; }
.pct { margin-left: 14px; color: #aaa; }

/* dialog */
.dialog {
  position: absolute; left: 1094px; top: 250px; width: 385px;
  background: #f0f0f0; color: #000; border: 1px solid #666;
  box-shadow: 0 4px 14px 2px rgba(0, 0, 0, .35);
}
.dlg-title { display: flex; align-items: center; height: 30px; padding: 0 17px 2px 8px; background: #fff; }
.dlg-title span { flex: 1; }
.help { margin-right: 36px; font-size: 14px; }
.dlg-body { display: flex; flex-direction: column; padding: 0 6px 9px; gap: 5px; }
.dlg-body h3 { display: flex; align-items: center; gap: 5px; margin-top: 6px; line-height: 18px; }
.dlg-body h3.first { margin-top: 9px; }
.dlg-body h3::after { content: ""; flex: 1; height: 1px; background: #dcdcdc; }
.lead { margin-top: 5px; }
.next { margin-top: 2px; }
.after { margin-top: 1px; }
.opt { display: flex; align-items: center; height: 18px; padding-left: 9px; gap: 3px; }
.opt input { appearance: none; width: 13px; height: 13px; background: #fff; border: 1px solid #333; }
.opt input[type="radio"] { border-radius: 50%; }
.opt input[type="radio"]:checked { background: radial-gradient(circle, #333 3px, #fff 4px); }
.opt.off input { border-color: #ccc; }
.opt.off, .conn-name { color: #6d6d6d; }
.opt span { border: 1px solid transparent; line-height: 16px; }
.opt span.focus { border: 1px dotted #000; }
.field { display: flex; align-items: center; height: 26px; padding-left: 45px; gap: 9px; }
.ref { display: flex; flex: 1; height: 26px; border: 1px solid #abadb3; background: #fff; }
.ref input { flex: 1; padding: 0 0 1px 3px; }
.ref button { width: 22px; display: flex; justify-content: center; align-items: center; padding-bottom: 4px; background: #e1e1e1; border: 1px solid #adadad; }
.conn { align-self: flex-start; margin-left: 45px; width: 90px; height: 29px; background: #ccc; border: 1px solid #bfbfbf; color: #a0a0a0; text-shadow: 1px 1px #fff; }
.conn-name { padding-left: 45px; line-height: 18px; }
.actions { display: flex; justify-content: flex-end; gap: 10px; margin-top: 6px; padding-right: 1px; }
.actions button { width: 74px; height: 29px; background: #e1e1e1; border: 1px solid #adadad; }
.actions .ok { background: #e5f1fb; border-color: #0078d7; }
.grip { position: absolute; right: 0; bottom: 0; }
.cursor { position: absolute; right: 87px; bottom: -9px; }

/* site mark */
.watermark { position: fixed; right: 11px; bottom: 7px; display: flex; gap: 1px; opacity: .85; }
.watermark div { display: flex; flex-direction: column; }
.watermark b { font: 700 21px/25px "Noto Sans CJK SC", sans-serif; color: #4a8cd0; }
.watermark span { font: 400 17px/18px "Liberation Sans", sans-serif; color: #3fb45c; }
```
